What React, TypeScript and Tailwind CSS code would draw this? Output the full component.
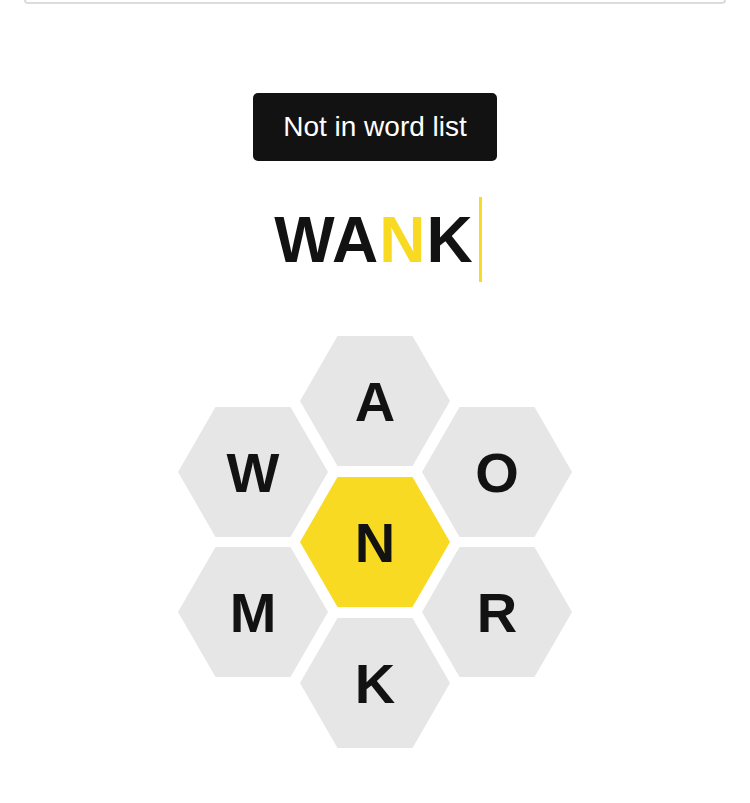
import React from "react";

const HEX = "-75,0 -37.5,-65 37.5,-65 75,0 37.5,65 -37.5,65";

const cells: { l: string; x: number; y: number; center?: boolean }[] = [
  { l: "A", x: 200, y: 65 },
  { l: "W", x: 78, y: 136 },
  { l: "O", x: 322, y: 136 },
  { l: "N", x: 200, y: 206, center: true },
  { l: "M", x: 78, y: 276 },
  { l: "R", x: 322, y: 276 },
  { l: "K", x: 200, y: 347 },
];

export default function App() {
  return (
    <div className="w-full h-[803px] bg-white flex flex-col items-center overflow-hidden" style={{ fontFamily: '"Liberation Sans", Arial, sans-serif' }}>
      <div className="self-stretch mx-[24px] h-[4px] border-x-2 border-b-2 border-[#dcdcdc] rounded-b-[10px]" />
      <div className="mt-[89px] w-[244px] h-[68px] rounded-[5px] bg-[#121212] text-white text-[28px] flex items-center justify-center">
        Not in word list
      </div>
      <div className="mt-[36px] h-[85px] flex items-center pl-[6px]">
        <span className="text-[64px] leading-none font-bold text-[#121212] tracking-[1px]">
          WA<span className="text-[#f7da21]">N</span>K
        </span>
        <span className="ml-[5px] w-[3px] h-[85px] bg-[#f7da21]" />
      </div>
      <svg className="mt-[54px]" width="400" height="412" viewBox="0 0 400 412">
        {cells.map((c) => (
          <g key={c.l} transform={`translate(${c.x},${c.y})`}>
            <polygon points={HEX} fill={c.center ? "#f7da21" : "#e6e6e6"} />
            <text
              x="0"
              y="20"
              textAnchor="middle"
              fontSize="56"
              fontWeight="700"
              fill="#121212"
              fontFamily='"Liberation Sans", Arial, sans-serif'
            >
              {c.l}
            </text>
          </g>
        ))}
      </svg>
    </div>
  );
}
